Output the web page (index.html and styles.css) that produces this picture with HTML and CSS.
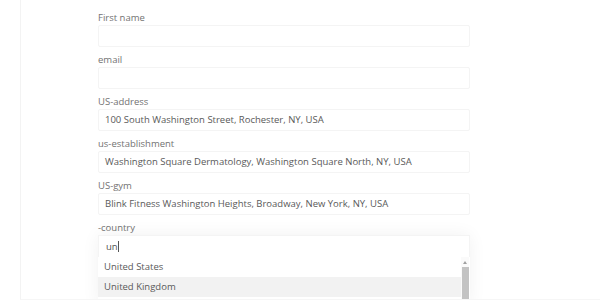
FILE: index.html
```html
<!DOCTYPE html>
<html>
<head>
<meta charset="utf-8">
<link rel="stylesheet" href="styles.css">
</head>
<body>
<div class="panel">
  <form class="form">
    <div class="field">
      <label class="label">First name</label>
      <div class="input"></div>
    </div>
    <div class="field">
      <label class="label">email</label>
      <div class="input"></div>
    </div>
    <div class="field">
      <label class="label">US-address</label>
      <div class="input">100 South Washington Street, Rochester, NY, USA</div>
    </div>
    <div class="field">
      <label class="label">us-establishment</label>
      <div class="input">Washington Square Dermatology, Washington Square North, NY, USA</div>
    </div>
    <div class="field">
      <label class="label">US-gym</label>
      <div class="input">Blink Fitness Washington Heights, Broadway, New York, NY, USA</div>
    </div>
    <div class="field">
      <label class="label">-country</label>
      <div class="combo">
        <div class="combo-input">un<span class="caret"></span></div>
        <div class="list">
          <ul class="options">
            <li class="option">United States</li>
            <li class="option active">United Kingdom</li>
            <li class="option">United Arab Emirates</li>
          </ul>
          <div class="scrollbar">
            <div class="arrow"></div>
            <div class="thumb"></div>
          </div>
        </div>
      </div>
    </div>
  </form>
</div>
</body>
</html>
```
FILE: styles.css
```css
html, body {
  margin: 0;
  padding: 0;
  background: #fff;
  overflow: hidden;
}
body {
  font-family: "Open Sans", "Noto Sans", sans-serif;
  width: 600px;
  height: 303px;
}
.panel {
  margin-left: 20px;
  width: 580px;
  height: 300px;
  border-left: 1px solid #f3f3f3;
  border-bottom: 1px solid #f6f6f6;
  box-sizing: border-box;
  padding: 11px 0 0 77px;
  overflow: hidden;
}
.form {
  width: 372px;
  display: flex;
  flex-direction: column;
  gap: 6px;
}
.field {
  display: flex;
  flex-direction: column;
  gap: 1px;
}
.label {
  font-size: 9.5px;
  line-height: 13px;
  height: 13px;
  color: #727272;
}
.input {
  height: 22px;
  box-sizing: border-box;
  border: 1px solid #f4f4f4;
  border-radius: 2px;
  padding: 0 6px;
  font-size: 9.5px;
  line-height: 20px;
  color: #595959;
  white-space: nowrap;
  overflow: hidden;
}
.combo {
  position: relative;
  height: 70px;
  box-shadow: 0 0 18px rgba(0, 0, 0, 0.06);
  border-radius: 2px;
}
.combo-input {
  height: 21px;
  padding: 0 7px;
  font-size: 9.5px;
  line-height: 21px;
  color: #555;
  border: 1px solid #f4f4f4;
  border-bottom: none;
  display: flex;
  align-items: center;
}
.caret {
  display: inline-block;
  width: 1px;
  height: 11px;
  background: #555;
  margin-left: 0.5px;
}
.list {
  display: flex;
  height: 49px;
  overflow: hidden;
}
.options {
  list-style: none;
  margin: 0;
  padding: 0;
  flex: 1;
}
.option {
  height: 20px;
  line-height: 20px;
  padding: 0 6px;
  font-size: 9.5px;
  color: #595959;
}
.option.active {
  background: #f2f2f2;
}
.scrollbar {
  width: 8px;
  display: flex;
  flex-direction: column;
  align-items: center;
  background: #fafafa;
  margin-right: 1px;
}
.arrow {
  margin-top: 4px;
  width: 0;
  height: 0;
  border-left: 2px solid transparent;
  border-right: 2px solid transparent;
  border-bottom: 3px solid #a0a0a0;
}
.thumb {
  margin-top: 3px;
  width: 7px;
  flex: 1;
  background: #c3c3c3;
}
```
